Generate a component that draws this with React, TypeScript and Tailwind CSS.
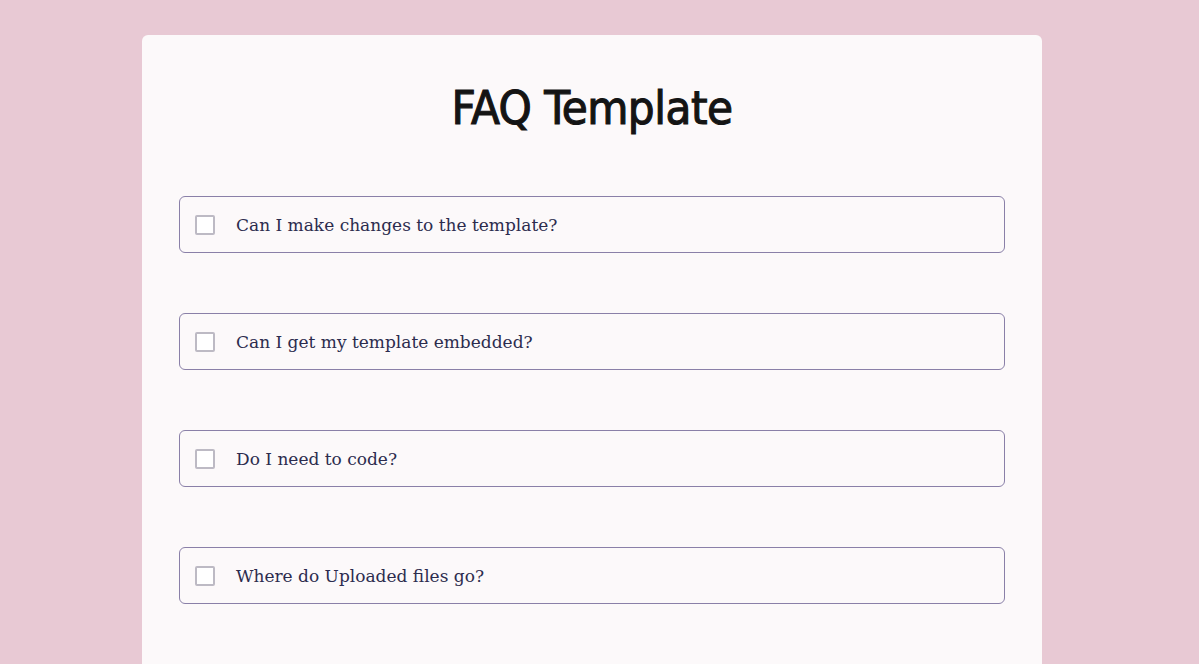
import React from "react";

const questions = [
  "Can I make changes to the template?",
  "Can I get my template embedded?",
  "Do I need to code?",
  "Where do Uploaded files go?",
];

export default function App() {
  return (
    <div className="h-[664px] w-full bg-[#e8c9d4] pt-[35px] overflow-hidden">
      <div className="ml-[142px] w-[900px] h-[629px] rounded-t-[6px] bg-[#fcf9fa] px-[37px] pt-[45px]">
        <h1
          className="text-center text-[47px] leading-[56px] font-normal text-[#141414] tracking-[-0.5px]"
          style={{
            fontFamily: '"DejaVu Sans Condensed", "DejaVu Sans", sans-serif',
            fontStretch: "condensed",
            WebkitTextStroke: "1.1px #141414",
          }}
        >
          FAQ Template
        </h1>
        <div className="mt-[60px] flex flex-col gap-[60px]">
          {questions.map((q) => (
            <label
              key={q}
              className="flex h-[57px] items-center rounded-[6px] border border-[#8a80a8] pl-[15px] pt-[2px]"
            >
              <span className="-mt-[2px] h-[20px] w-[20px] rounded-[2px] border-2 border-[#bdbac4] bg-white" />
              <span
                className="ml-[21px] text-[17px] text-[#2c2c4e]"
                style={{ fontFamily: '"DejaVu Serif", "Liberation Serif", serif' }}
              >
                {q}
              </span>
            </label>
          ))}
        </div>
      </div>
    </div>
  );
}
